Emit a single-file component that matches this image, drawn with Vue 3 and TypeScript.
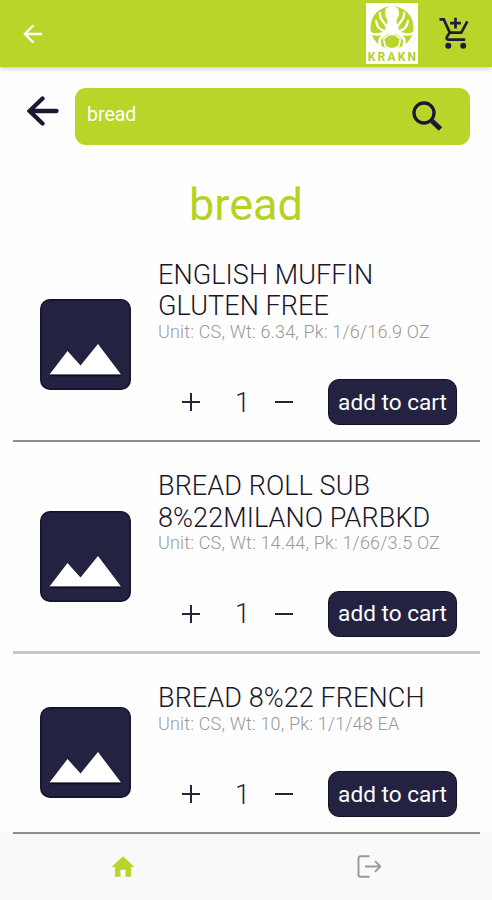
<script setup lang="ts">
import { ref } from 'vue'

interface Product {
  lines: string[]
  details: string
  quantity: number
  tone: string
}

const query = ref('bread')

const products = ref<Product[]>([
  { lines: ['ENGLISH MUFFIN', 'GLUTEN FREE'], details: 'Unit: CS, Wt: 6.34, Pk: 1/6/16.9 OZ', quantity: 1, tone: 'roomy' },
  { lines: ['BREAD ROLL SUB', '8%22MILANO PARBKD'], details: 'Unit: CS, Wt: 14.44, Pk: 1/66/3.5 OZ', quantity: 1, tone: 'soft' },
  { lines: ['BREAD 8%22 FRENCH'], details: 'Unit: CS, Wt: 10, Pk: 1/1/48 EA', quantity: 1, tone: 'plain-line' },
])

function decrease(product: Product) {
  if (product.quantity > 1) product.quantity -= 1
}
</script>

<template>
  <div class="screen">
    <header class="app-bar">
      <button class="plain back">
        <svg width="20" height="20" viewBox="0 0 20 20"><path d="M19 10H2M10.5 1.3 1.8 10l8.7 8.7" fill="none" stroke="#fff" stroke-width="2.3" /></svg>
      </button>
      <div class="bar-right">
        <div class="logo">
          <svg class="mark" width="52" height="48" viewBox="0 0 52 48">
            <circle cx="26" cy="24.5" r="21.5" fill="#b9d52a" />
            <g fill="none" stroke="#fff" stroke-linecap="round">
              <path d="M21 25C20 19 13 18 14 10" stroke-width="2.400" />
              <path d="M31 25c1-6 8-7 7-15" stroke-width="2.400" />
              <path d="M21 28C15 28 11 25 10 18" stroke-width="2.200" />
              <path d="M31 28c6 0 10-3 11-10" stroke-width="2.200" />
              <path d="M21 29C15 31 9 33 4.500 30" stroke-width="2.600" />
              <path d="M31 29c6 2 12 4 16.500 1" stroke-width="2.600" />
              <path d="M22 29C16 33 12 35 14 42" stroke-width="2.800" />
              <path d="M30 29c6 4 10 6 8 13" stroke-width="2.800" />
            </g>
            <path d="M26 3c-5 0-7.500 3.600-7 8 .4 3.500 2.500 4.500 2.500 8L19 28l7 5 7-5-2.500-9c0-3.500 2.100-4.500 2.500-8 .5-4.400-2-8-7-8Z" fill="#fff" />
            <path d="M23 31.500h6l5.500 4-1.700 8q-6.800 4.400-13.600 0l-1.700-8Z" fill="#b9d52a" stroke="#fff" stroke-width="1.600" />
          </svg>
          <span class="brand">KRAKN</span>
        </div>
        <button class="plain cart">
          <svg width="31" height="33" viewBox="0 0 31 33">
            <path d="M.5 2.400h4.300l6 13.200h11.500l6-11.200M10.800 15.600 8 19.800q-1.300 2.500 1.500 2.800h16.700M16.500.8v10.800M11.100 6.200h10.800" fill="none" stroke="#1e1d3a" stroke-width="2.700" />
            <circle cx="9.300" cy="28.800" r="3" fill="#1e1d3a" />
            <circle cx="24.200" cy="28.800" r="3" fill="#1e1d3a" />
          </svg>
        </button>
      </div>
    </header>

    <div class="search-row">
      <button class="plain">
        <svg width="32" height="30" viewBox="0 0 32 30"><path d="M29.500 15H3M15.500 2.500 2.500 15l13 12.500" fill="none" stroke="#1a1836" stroke-width="4.300" stroke-linecap="round" /></svg>
      </button>
      <div class="search">
        <span class="query">{{ query }}</span>
        <svg width="31" height="31" viewBox="0 0 31 31">
          <circle cx="12" cy="12" r="10" fill="none" stroke="#1a1836" stroke-width="3.300" />
          <path d="m20 20 8.500 8" stroke="#1a1836" stroke-width="5" />
        </svg>
      </div>
    </div>

    <h1>{{ query }}</h1>

    <main>
      <article v-for="product in products" :key="product.details" class="product" :class="product.tone">
        <svg class="thumb" width="91" height="91" viewBox="0 0 91 91">
          <rect x=".8" y=".8" width="89.400" height="89.400" rx="9" fill="#232341" stroke="#10102b" stroke-width="1.500" />
          <path d="M9.500 75.500 27.500 52l13 14.500L58 45l23 30.500Z" fill="#fff" />
          <path d="M10 76.500h71" stroke="#0c0b26" stroke-width="1.500" />
        </svg>
        <div class="info">
          <h2><span v-for="line in product.lines" :key="line">{{ line }}</span></h2>
          <p>{{ product.details }}</p>
          <div class="actions">
            <button class="plain step" @click="product.quantity++">
              <svg width="18" height="18" viewBox="0 0 18 18"><path d="M9 0v18M0 9h18" stroke="#25243b" stroke-width="2" /></svg>
            </button>
            <span class="quantity">{{ product.quantity }}</span>
            <button class="plain step" @click="decrease(product)">
              <svg width="18" height="18" viewBox="0 0 18 18"><path d="M0 9h18" stroke="#25243b" stroke-width="2" /></svg>
            </button>
            <button class="plain add">add to cart</button>
          </div>
        </div>
      </article>
    </main>

    <nav class="tabs">
      <button class="plain tab">
        <svg width="24" height="21" viewBox="0 0 24 21"><path d="M12 .3 23.500 11H20v9.700h-5.500v-7h-5v7H4V11H.5Z" fill="#b9d52a" /></svg>
      </button>
      <button class="plain tab">
        <svg width="25" height="23" viewBox="0 0 25 23"><path d="M12.500 1.300H3.500Q1.500 1.300 1.500 3.300v16.400q0 2 2 2h9M8 11.500h15M18 6.200l5.300 5.300-5.300 5.300" fill="none" stroke="#999" stroke-width="1.900" /></svg>
      </button>
    </nav>
  </div>
</template>

<style>
body {
  background: #fff;
}
</style>

<style scoped>
.screen {
  display: flex;
  flex-direction: column;
  width: 492px;
  height: 900px;
  overflow: hidden;
  background: #fefefe;
  font-family: Roboto, "Liberation Sans", sans-serif;
}
.plain {
  display: flex;
  align-items: center;
  justify-content: center;
  padding: 0;
  border: 0;
  background: none;
  font: inherit;
}
svg {
  display: block;
}
.app-bar {
  display: flex;
  flex: none;
  align-items: center;
  justify-content: space-between;
  height: 67px;
  padding: 0 22px 0 23px;
  background: #b9d52a;
  box-shadow: 0 1px 5px rgba(50, 40, 80, 0.3);
}
.bar-right {
  display: flex;
  align-items: center;
  gap: 21px;
}
.logo {
  display: flex;
  flex-direction: column;
  align-items: center;
  width: 52px;
  height: 61px;
  background: #fff;
}
.brand {
  margin-right: -2px;
  color: #b2ce2c;
  font-size: 12px;
  font-weight: 700;
  letter-spacing: 2.200px;
  line-height: 13px;
}
.search-row {
  display: flex;
  flex: none;
  align-items: flex-start;
  gap: 16px;
  margin: 21px 22px 0 27px;
}
.search-row > .plain {
  margin-top: 8px;
}
.search {
  display: flex;
  flex: 1;
  align-items: center;
  justify-content: space-between;
  box-sizing: border-box;
  height: 57px;
  padding: 0 27px 0 12px;
  border-radius: 11px;
  background: #b9d52a;
}
.query {
  margin-bottom: 5px;
  color: #fff;
  font-size: 19.500px;
}
h1 {
  flex: none;
  height: 84px;
  margin: 0;
  color: #b5d220;
  font-size: 45px;
  font-weight: 400;
  line-height: 120px;
  text-align: center;
}
main {
  position: relative;
  z-index: 1;
  display: flex;
  flex: none;
  flex-direction: column;
  padding: 0 12px 0 13px;
}
.product {
  display: flex;
  align-items: center;
  gap: 27px;
  padding-left: 27px;
  border-bottom: 2px solid #8f8f8f;
}
.product.soft {
  border-bottom: 3px solid #c8c8c8;
}
.thumb {
  flex: none;
  margin-top: 19px;
}
.info {
  flex: 1;
  padding: 29px 0 15.500px;
}
.roomy .info {
  padding: 30.500px 0 15.500px;
}
.soft .info {
  padding-bottom: 15px;
}
h2 {
  display: flex;
  flex-direction: column;
  margin: 0;
  color: #17162b;
  font-size: 27px;
  font-weight: 300;
  letter-spacing: 0.080px;
  line-height: 31.500px;
}
p {
  height: 57px;
  margin: 0;
  color: #999;
  font-size: 18px;
  font-weight: 300;
  letter-spacing: 0.170px;
  line-height: 18.500px;
}
.actions {
  display: flex;
  align-items: center;
  height: 45px;
}
.step {
  width: 18px;
}
.step:first-child {
  margin-left: 24px;
}
.quantity {
  width: 75px;
  padding: 1px 0 0 10px;
  box-sizing: border-box;
  color: #232240;
  font-size: 27px;
  font-weight: 300;
  text-align: center;
}
.add {
  width: 129px;
  height: 46px;
  margin-left: 35px;
  padding-top: 0;
  border: 1px solid #111029;
  border-radius: 11px;
  background: #232341;
  color: #fff;
  font-size: 22.600px;
}
.tabs {
  display: grid;
  flex: 1;
  grid-template-columns: 1fr 1fr;
  margin-top: -2px;
  background: #f9f9f9;
}
</style>
